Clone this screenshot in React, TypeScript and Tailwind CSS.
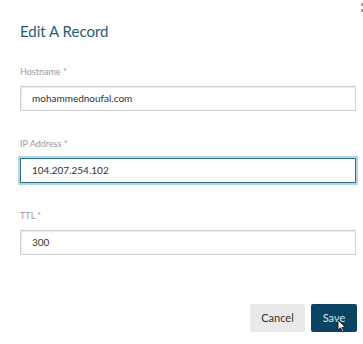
const fields = [
  { label: 'Hostname', value: 'mohammednoufal.com', focused: false },
  { label: 'IP Address', value: '104.207.254.102', focused: true },
  { label: 'TTL', value: '300', focused: false },
]

const App = () => {
  return (
    <div
      className="relative h-[344px] w-[363px] overflow-hidden bg-white"
      style={{ fontFamily: 'Lato, "Noto Sans", sans-serif' }}
    >
      <div className="absolute right-0 top-[3px] flex flex-col gap-[3px]">
        <span className="block h-[3px] w-[2px] bg-gray-400" />
        <span className="block h-[3px] w-[2px] bg-gray-400" />
      </div>

      <div className="pl-5 pr-[7px] pt-[21px]">
        <h2 className="h-5 text-[15px] leading-5 text-[#2c5a73]">
          Edit A Record
        </h2>

        <div className="mt-[25px] flex flex-col gap-[27px]">
          {fields.map((field) => (
            <div key={field.label}>
              <label className="block h-3 text-[9px] leading-3 text-[#9a9a9a]">
                {field.label} *
              </label>
              <div
                className={
                  field.focused
                    ? 'mt-[8px] flex h-[25px] items-center border border-[#2f6f85] px-[11px] shadow-[0_0_0_2px_#b9d4e2]'
                    : 'mt-[8px] flex h-[25px] items-center border border-[#cfcfcf] px-[11px] shadow-[inset_1px_1px_1px_rgba(0,0,0,0.08)]'
                }
              >
                <span className="text-[10px] text-[#333]">{field.value}</span>
              </div>
            </div>
          ))}
        </div>

        <div className="-mr-px mt-[49px] flex justify-end gap-[6px]">
          <button className="h-[28px] w-[55px] rounded-[2px] bg-[#e9e9e9] text-[11px] text-[#333]">
            Cancel
          </button>
          <button className="relative h-[28px] w-[46px] rounded-[2px] bg-[#0b4462] text-[11px] text-[#d6e6ef]">
            Save
            <svg
              className="absolute left-[26px] top-[15px]"
              width="10"
              height="14"
              viewBox="0 0 10 14"
            >
              <path
                d="M1 1 L1 11 L3.5 8.8 L5.5 13 L7 12.3 L5 8.2 L8.5 8.2 Z"
                fill="#fff"
                stroke="#000"
                strokeWidth="0.8"
                strokeLinejoin="round"
              />
            </svg>
          </button>
        </div>
      </div>
    </div>
  )
}

export default App
